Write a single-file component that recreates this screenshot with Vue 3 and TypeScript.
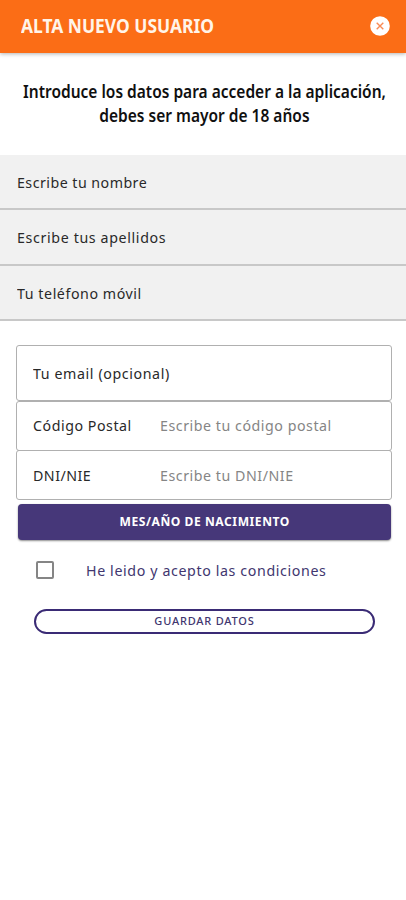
<script setup lang="ts">
import { ref } from 'vue'

const accepted = ref(false)
const personal: { id: string; label: string }[] = [
  { id: 'name', label: 'Escribe tu nombre' },
  { id: 'surname', label: 'Escribe tus apellidos' },
  { id: 'phone', label: 'Tu teléfono móvil' },
]
</script>

<template>
  <main class="screen">
    <header class="bar">
      <h1><span class="title">ALTA NUEVO USUARIO</span></h1>
      <button class="close" aria-label="Cerrar">
        <svg viewBox="0 0 20 20" width="20" height="20">
          <circle cx="10" cy="10" r="9.8" fill="#fff" />
          <path d="M6.7 6.7l6.6 6.6M13.3 6.7l-6.6 6.6" stroke="#f98b55" stroke-width="1.4" />
        </svg>
      </button>
    </header>
    <div class="intro">
      <p class="first"><span>Introduce los datos para acceder a la aplicación,</span></p>
      <p class="second"><span>debes ser mayor de 18 años</span></p>
    </div>
    <section class="filled">
      <div v-for="f in personal" :key="f.id" class="row" :class="f.id"><span class="text">{{ f.label }}</span></div>
    </section>
    <section class="outlined">
      <div class="box email"><span class="text">Tu email (opcional)</span></div>
      <div class="box"><span class="label"><span class="text postal">Código Postal</span></span><span class="text hint">Escribe tu código postal</span></div>
      <div class="box"><span class="label"><span class="text dni">DNI/NIE</span></span><span class="text hint">Escribe tu DNI/NIE</span></div>
    </section>
    <button class="birth"><span>MES/AÑO DE NACIMIENTO</span></button>
    <label class="terms">
      <input v-model="accepted" type="checkbox" />
      <span class="text">He leido y acepto las condiciones</span>
    </label>
    <button class="save"><span>GUARDAR DATOS</span></button>
  </main>
</template>

<style>
body { background: #fff; }
</style>

<style scoped>
* { box-sizing: border-box; }
.screen {
  height: 900px;
  overflow: hidden;
  display: flex;
  flex-direction: column;
  background: #fff;
  color: #292929;
  font: 15.3px/20px "Noto Sans", sans-serif;
  white-space: nowrap;
}
button { padding: 0; border: 0; font-family: inherit; }
.text {
  display: inline-block;
  transform: scaleX(.93);
  transform-origin: left;
  letter-spacing: .57px;
}
.bar {
  height: 53px;
  flex: none;
  display: flex;
  align-items: center;
  justify-content: space-between;
  padding: 0 16px 2px 21px;
  background: #fb6d16;
  box-shadow: 0 1px 4px rgba(0, 0, 0, .3);
}
h1 { margin: 0; font: 700 19px/24px "Noto Sans", sans-serif; color: #fff4e9; }
.title { display: inline-block; transform: scaleX(.916); transform-origin: left; }
.close { width: 20px; height: 20px; background: none; }
.close svg { display: block; }
.intro {
  height: 102px;
  flex: none;
  padding-top: 26px;
  color: #101010;
  font: 600 18.5px/24px "Noto Sans", sans-serif;
}
.intro p { margin: 0; display: flex; justify-content: center; }
.intro span { flex: none; transform: translateX(1px) scaleX(.838); }
.filled { flex: none; }
.row {
  height: 55.5px;
  padding: 17px 16.5px 0;
  background: #f1f1f1;
  border-bottom: 2px solid #c8c8c8;
}
.row:first-child { height: 55px; }
.name .text { letter-spacing: .5px; }
.surname .text { letter-spacing: .68px; }
.phone .text { letter-spacing: .6px; }
.outlined { flex: none; margin: 24px 14px 0 16px; }
.box {
  height: 50px;
  display: flex;
  align-items: center;
  padding: 0 0 1px 16px;
  border: 1.5px solid #b0b0b0;
  border-radius: 3px;
}
.email { height: 56px; padding-bottom: 0; }
.email .text { letter-spacing: .64px; }
.box + .box { margin-top: -.5px; }
.label { width: 127px; }
.dni { letter-spacing: .5px; }
.hint { color: #858585; }
.birth {
  flex: none;
  height: 36px;
  margin: 4px 15px 0 18px;
  padding-bottom: 2px;
  border-radius: 4px;
  background: #463779;
  color: #fff;
  font-size: 13px;
  font-weight: 700;
  box-shadow: 0 1px 2px rgba(0, 0, 0, .45);
}
.birth span {
  display: inline-block;
  letter-spacing: .6px;
  transform: scaleX(.93);
}
.terms {
  flex: none;
  height: 20px;
  margin: 20px 0 0 36px;
  display: flex;
  align-items: center;
  color: #41366f;
}
.terms .text { letter-spacing: .66px; }
.terms input {
  appearance: none;
  width: 18px;
  height: 18px;
  margin: 0 31.5px 0 0;
  border: 2px solid #858585;
  border-radius: 2px;
}
.save {
  flex: none;
  height: 25px;
  margin: 29px 31px 0 34px;
  padding-bottom: 2px;
  border: 2px solid #3a2b75;
  border-radius: 13px;
  background: #fff;
  color: #41366f;
  font-size: 11px;
  font-weight: 500;
  letter-spacing: .8px;
}
</style>
